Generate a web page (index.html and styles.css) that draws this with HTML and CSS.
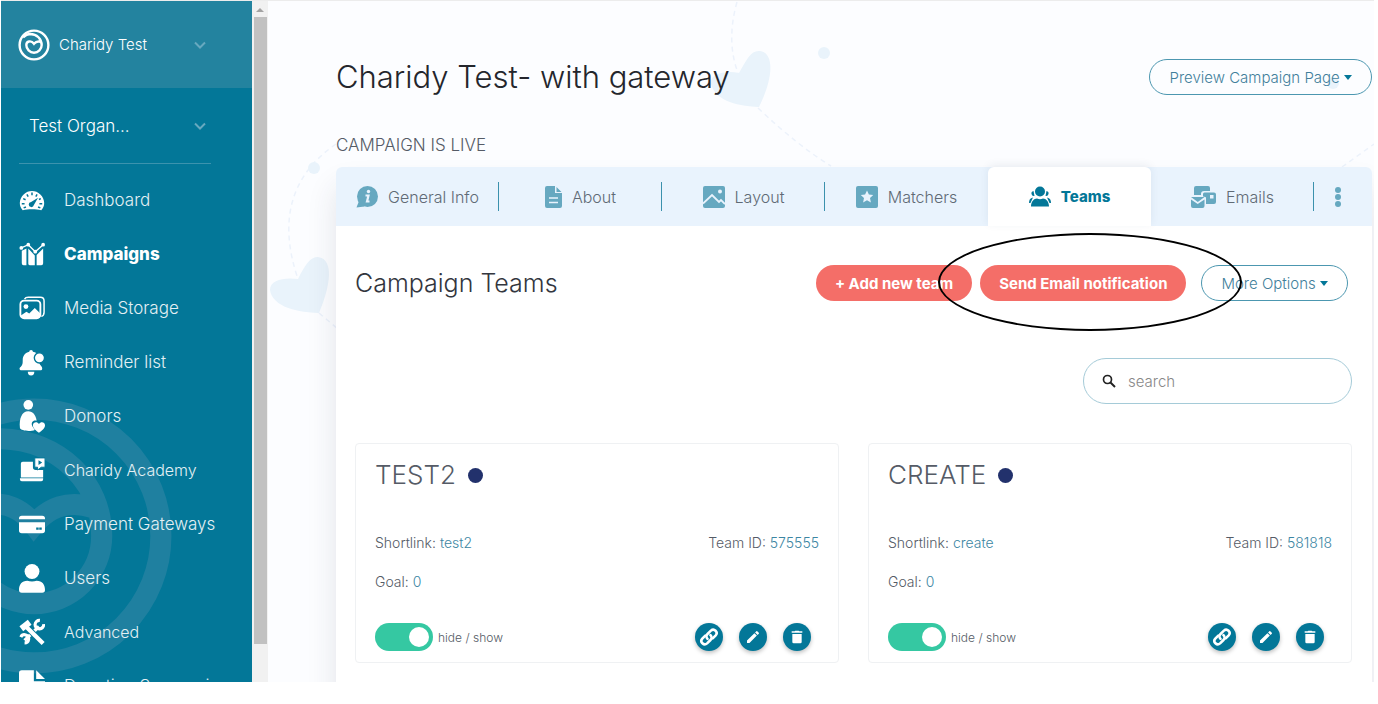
FILE: index.html
```html
<!DOCTYPE html>
<html lang="en">
<head>
  <meta charset="UTF-8">
  <meta name="viewport" content="width=device-width, initial-scale=1.0">
  <title>Campaign Teams</title>
  <link rel="stylesheet" href="styles.css">
</head>
<body>
<!-- shared icons -->
<svg class="sprite" aria-hidden="true">
  <symbol id="logo" viewBox="0 0 100 100">
    <g fill="none" stroke="currentColor" stroke-width="7.5">
      <circle cx="50" cy="50" r="45"/>
      <path d="M16 26C24 18 31 15.5 38 15.5C59 16 74 31 74 50A24 24 0 0 1 26 50C26 38 41 34 50 46C55 40 62 37 71 40"/>
    </g>
  </symbol>
  <symbol id="chevron" viewBox="0 0 12 8"><path d="M1 1.500l5 5 5-5" fill="none" stroke="currentColor" stroke-width="2"/></symbol>
  <symbol id="link" viewBox="0 0 20 20">
    <g fill="none" stroke="currentColor" stroke-width="2.6" stroke-linecap="round">
      <path d="M8.500 11.800a3.400 3.400 0 0 1 0-4.800l3.400-3.400a3.400 3.400 0 0 1 4.800 4.800l-3 3"/>
      <path d="M11.500 8.200a3.400 3.400 0 0 1 0 4.800l-3.400 3.400a3.400 3.400 0 0 1-4.800-4.800l3-3"/>
    </g>
  </symbol>
  <symbol id="pencil" viewBox="0 0 24 24"><path fill="currentColor" d="M3 17.300V21h3.700L17.800 9.900l-3.700-3.700zM20.700 7c.4-.4.4-1 0-1.400l-2.300-2.300a1 1 0 0 0-1.400 0l-1.900 1.800 3.800 3.800z"/></symbol>
  <symbol id="trash" viewBox="0 0 24 24"><path fill="currentColor" d="M5 7.500h14v12a2 2 0 0 1-2 2H7a2 2 0 0 1-2-2zM20 3.500v2.200H4V3.500h4.500l1-1h5l1 1z"/></symbol>
</svg>

<div class="app">
  <nav class="sidebar">
    <svg class="watermark" aria-hidden="true"><use href="#logo"/></svg>
    <button class="account">
      <svg class="brand"><use href="#logo"/></svg>
      <span>Charidy Test</span>
      <svg class="chevron"><use href="#chevron"/></svg>
    </button>
    <button class="organization">
      <span>Test Organ...</span>
      <svg class="chevron"><use href="#chevron"/></svg>
    </button>
    <ul class="menu">
      <li><a href="#">
        <svg viewBox="0 0 28 28"><path fill="currentColor" d="M4 25C-1 20 .5 12 5 8 10 3 18 3 23 8c4.500 4 6 12 1 17-6-1.500-14-1.500-20 0z"/><g stroke="#037798" stroke-width="1.600"><path d="M14 6v3M8.500 8l1.400 2.400M19.500 8l-1.400 2.400M4.500 12.500l2.600 1.200M3 18h3M22 18h3M5 22.500l2.500-1M23 22.500l-2.500-1M23.500 12.500l-2 1"/></g><path fill="#037798" d="M20.500 11.500l-4.500 8a2.800 2.800 0 1 1-3-3.400z"/></svg>
        Dashboard</a></li>
      <li class="active"><a href="#">
        <svg viewBox="0 0 28 28"><g fill="currentColor"><path d="M3 10.500l5-2.500v18H5a2 2 0 0 1-2-2zM10 8l7 7.500V26h-5.500a1.500 1.500 0 0 1-1.500-1.500zM19 15l7-7v16a2 2 0 0 1-2 2h-5z"/><circle cx="2.500" cy="7.500" r="2"/><circle cx="10" cy="4" r="2"/><circle cx="17.500" cy="11.500" r="2"/><circle cx="26" cy="4" r="2"/></g><path d="M2.500 7.500L10 4l7.500 7.500L26 4" fill="none" stroke="currentColor" stroke-width="1.500"/></svg>
        Campaigns</a></li>
      <li><a href="#">
        <svg viewBox="0 0 28 28"><path d="M6 4.500c1-2 2-2 4-2h13c3 0 4 1 4 4v12c0 3-1 4-3 4.500" fill="none" stroke="currentColor" stroke-width="1.600"/><rect x="1.500" y="6" width="21.500" height="19" rx="4" fill="none" stroke="currentColor" stroke-width="2"/><circle cx="7.500" cy="12.500" r="2.600" fill="currentColor"/><path d="M2 22l6-4 3 2 6-6 6 6v2q0 3-3 3H5q-3 0-3-3z" fill="currentColor"/></svg>
        Media Storage</a></li>
      <li><a href="#">
        <svg viewBox="0 0 28 28"><path fill="currentColor" d="M11 3a2 2 0 0 1 4 0c6 1 7 6 7 11 0 4 3 4 3 7 0 2-1 2-2 2H3c-3 0-3-3-1-4 2-2 2-4 2-7 0-5 3-8 7-9zM9.500 24.500h7c0 2.500-1 4-3.500 4s-3.500-1.500-3.500-4z"/><circle cx="22" cy="9.500" r="5.500" fill="currentColor" stroke="#037798" stroke-width="1.500"/></svg>
        Reminder list</a></li>
      <li><a href="#">
        <svg class="tall" viewBox="0 0 28 36"><g fill="currentColor"><circle cx="10" cy="6" r="5.200"/><path d="M1 31C0 21 3 13 10 13c5 0 8 4 9 10-4-1-6 2-5 5 .5 2 2 3 3 5-5 2-15 1-16-2z"/><path d="M21.500 36c-3-2-6.500-4.500-6.500-8s4.500-4.500 6.500-1.500c2-3 6.500-2 6.500 1.500s-3.500 6-6.500 8z"/></g></svg>
        Donors</a></li>
      <li class="compact"><a href="#">
        <svg viewBox="0 0 28 28"><path fill="currentColor" d="M4 5h11v6q0 3 3 3h8v8H2V7q0-2 2-2zM1 23h25v1q0 2-2 2H3q-2 0-2-2z"/><path d="M17 1h11v10h-4l-4 3v-3h-3z" fill="currentColor" stroke="#037798"/><path d="M21 3.500l4 2.500-4 2.500z" fill="#037798"/></svg>
        Charidy Academy</a></li>
      <li><a href="#">
        <svg viewBox="0 0 28 28"><path fill="currentColor" d="M3 5h22q3 0 3 3v1H0V8q0-3 3-3zM0 12h28v9q0 3-3 3H3q-3 0-3-3z"/><path d="M18.500 19h6" stroke="#037798" stroke-width="2.500" stroke-dasharray="2.700 .6"/></svg>
        Payment Gateways</a></li>
      <li><a href="#">
        <svg class="tall" viewBox="0 0 28 34"><circle cx="14" cy="10" r="8" fill="currentColor"/><path fill="currentColor" d="M0 30c0-6 3-10 9-10 3 1 7 1 10 0 6 0 9 4 9 10q0 3-3 3H3q-3 0-3-3z"/></svg>
        Users</a></li>
      <li class="compact"><a href="#">
        <svg viewBox="0 0 28 28"><path d="M6 23L21.500 8" stroke="currentColor" stroke-width="3.600"/><path d="M26.500 5.500a4.600 4.600 0 1 1-4-4M2 19.500a4.400 4.400 0 1 1 4 6.300" fill="none" stroke="currentColor" stroke-width="3.400"/><path d="M8 8.500l18 18" stroke="#037798" stroke-width="6.500"/><path d="M8 8.500L26 26.500" stroke="currentColor" stroke-width="4.600"/><path d="M2.500 10.500L11.500 3.500" stroke="currentColor" stroke-width="6.500"/></svg>
        Advanced</a></li>
      <li><a href="#">
        <svg class="tall" viewBox="0 0 28 34"><path fill="currentColor" d="M3 0h13v12h12v19q0 3-3 3H3q-3 0-3-3V3Q0 0 3 0zM18.500 0L28 9.500h-9.500z"/></svg>
        Donation Summaries</a></li>
    </ul>
  </nav>
  <div class="scrollbar"><span class="scroll-up"></span><span class="scroll-thumb"></span></div>

  <main class="main">
    <svg class="hearts" width="1106" height="400" aria-hidden="true">
      <g fill="none" stroke="#ecf2fb" stroke-width="1.500" stroke-dasharray="5 4">
        <path d="M469 1Q458 40 470 72M490 107Q530 145 563 165M68 143Q0 190 30 278M51 312L70 328M1074 166L1106 143"/>
      </g>
      <g fill="#e9f3fb">
        <path d="M471 72C479 58 483 49 492 50c15 2 13 28 -1 56C465 105 447 98 443 83c-2-10 14-14 28-11z"/>
        <path d="M30 278C37 264 42 256 50 256c16 2 13 28 1 56C22 311 4 303 2 289c0-10 14-13 28-11z"/>
        <circle cx="556" cy="52" r="6"/><circle cx="46" cy="167" r="6"/><circle cx="1065" cy="82" r="6"/>
      </g>
    </svg>
    <header class="page-head">
      <h1>Charidy Test- with gateway</h1>
      <button class="btn-outline">Preview Campaign Page <i class="caret"></i></button>
    </header>
    <p class="status">CAMPAIGN IS LIVE</p>

    <section class="panel">
      <nav class="tabs">
        <a href="#" class="tab divided">
          <svg viewBox="0 0 22 22"><circle cx="11.500" cy="10.500" r="10.500" fill="currentColor"/><path d="M3 15L.5 21.500l8-1z" fill="currentColor"/><circle cx="12.500" cy="5.500" r="1.700" fill="#e9f3fd"/><path d="M9.500 9.500h3l-1.500 6h2.500" fill="none" stroke="#e9f3fd" stroke-width="2.200"/></svg>
          General Info</a>
        <a href="#" class="tab divided">
          <svg class="narrow" viewBox="0 0 17 22"><path d="M2 0h8v7h7v13q0 2-2 2H2q-2 0-2-2V2Q0 0 2 0zM11.500 1l5 5h-5z" fill="currentColor"/><path d="M4 12h9M4 16.500h9" stroke="#e9f3fd" stroke-width="1.600"/></svg>
          About</a>
        <a href="#" class="tab divided">
          <svg viewBox="0 0 22 22"><rect width="22" height="22" rx="2" fill="currentColor"/><circle cx="17" cy="5.500" r="2" fill="#e9f3fd"/><path d="M0 17.500L9 9l7 7 2-2 4 4" fill="none" stroke="#e9f3fd" stroke-width="1.800"/></svg>
          Layout</a>
        <a href="#" class="tab">
          <svg viewBox="0 0 22 22"><rect width="22" height="22" rx="2" fill="currentColor"/><path d="M11 4.500l1.900 4 4.300.5-3.200 3 .9 4.400-3.900-2.200-3.900 2.200.9-4.400-3.200-3 4.300-.5z" fill="#e9f3fd"/></svg>
          Matchers</a>
        <a href="#" class="tab selected">
          <svg viewBox="0 0 22 22"><g fill="currentColor"><circle cx="11" cy="5.500" r="5"/><path d="M2 20.500c0-5 3-8 6-8q3 1.500 6 0c3 0 6 3 6 8z"/><path d="M4.500 5a2.500 2.500 0 0 0 1 5zM17.500 5a2.500 2.500 0 0 1-1 5zM0 17c0-3 1-5 4-5.500L1.500 17zM22 17c0-3-1-5-4-5.500l2.500 5.500z"/></g></svg>
          Teams</a>
        <a href="#" class="tab divided">
          <svg class="wide" viewBox="0 0 25 22"><path d="M5 0h12q2 0 2 2v3h-6q-3 0-3 3v1H3V2q0-2 2-2zM12 8q0-1.500 1.500-1.500H23q2 0 2 2V16q0 2-2 2h-8v-6q0-1.500-3-1.500zM0 11h13.500l-6.700 5zM0 13.500l6.700 4.500 6.800-4.500V20q0 2-2 2H2q-2 0-2-2z" fill="currentColor"/><rect x="19" y="9" width="3.500" height="3.500" fill="#e9f3fd"/></svg>
          Emails</a>
        <button class="more-tabs" aria-label="More"><span></span><span></span><span></span></button>
      </nav>

      <div class="panel-body">
        <div class="panel-head">
          <h2>Campaign Teams</h2>
          <div class="actions">
            <button class="btn">+ Add new team</button>
            <button class="btn">Send Email notification</button>
            <button class="btn-outline">More Options <i class="caret"></i></button>
            <div class="marker"></div>
          </div>
        </div>
        <label class="search">
          <svg viewBox="0 0 14 14"><circle cx="5.500" cy="5.500" r="4" fill="none" stroke="#222" stroke-width="1.700"/><path d="M8.500 8.500l4.500 4.500" stroke="#222" stroke-width="2"/></svg>
          <input type="search" placeholder="search" aria-label="search">
        </label>

        <div class="cards">
          <article class="card">
            <h3>TEST2 <i class="dot"></i></h3>
            <div class="info"><p>Shortlink: <a href="#">test2</a></p><p>Team ID: <b>575555</b></p></div>
            <div class="info"><p>Goal: <b>0</b></p></div>
            <div class="card-foot">
              <label class="toggle"><input type="checkbox" checked>hide / show</label>
              <div class="card-actions">
                <button aria-label="Copy link"><svg class="link"><use href="#link"/></svg></button>
                <button aria-label="Edit"><svg><use href="#pencil"/></svg></button>
                <button aria-label="Delete"><svg><use href="#trash"/></svg></button>
              </div>
            </div>
          </article>
          <article class="card">
            <h3>CREATE <i class="dot"></i></h3>
            <div class="info"><p>Shortlink: <a href="#">create</a></p><p>Team ID: <b>581818</b></p></div>
            <div class="info"><p>Goal: <b>0</b></p></div>
            <div class="card-foot">
              <label class="toggle"><input type="checkbox" checked>hide / show</label>
              <div class="card-actions">
                <button aria-label="Copy link"><svg class="link"><use href="#link"/></svg></button>
                <button aria-label="Edit"><svg><use href="#pencil"/></svg></button>
                <button aria-label="Delete"><svg><use href="#trash"/></svg></button>
              </div>
            </div>
          </article>
        </div>
      </div>
    </section>
  </main>
</div>
</body>
</html>
```
FILE: styles.css
```css
* {
  box-sizing: border-box;
}
body {
  margin: 0;
  background: #fff;
  color: #555b66;
  font-family: Inter, "Liberation Sans", sans-serif;
  font-weight: 300;
  overflow: hidden;
}
h1, h2, h3, p, ul {
  margin: 0;
  padding: 0;
  font-weight: 300;
}
button, input {
  font: inherit;
}
button {
  border: none;
  background: none;
  padding: 0;
  cursor: pointer;
}
a {
  color: inherit;
  text-decoration: none;
}
.sprite {
  display: none;
}
.app {
  display: flex;
  height: calc(100vh - 22px);
  margin: 0 4px 22px 1px;
  border-top: 1px solid #ececec;
  overflow: hidden;
}

/* sidebar */
.sidebar {
  position: relative;
  flex: 0 0 251px;
  background: #037798;
  color: #fff;
  overflow: hidden;
}
.watermark {
  position: absolute;
  left: -108px;
  top: 394px;
  width: 282px;
  height: 282px;
  color: #1f80a0;
}
.account,
.organization {
  position: relative;
  display: flex;
  align-items: center;
  color: #fff;
}
.account {
  width: 100%;
  height: 87px;
  padding: 0 46px 0 17px;
  gap: 9px;
  background: #23839f;
  font-size: 15px;
}
.organization {
  width: calc(100% - 59px);
  height: 76px;
  margin: 0 41px 9px 18px;
  padding: 0 5px 0 10px;
  border-bottom: 1px solid #3c93ae;
  font-size: 17px;
}
.brand {
  width: 32px;
  height: 32px;
}
.chevron {
  width: 12px;
  height: 8px;
  margin-left: auto;
  color: #67a9bf;
}
.menu {
  position: relative;
  list-style: none;
}
.menu a {
  display: flex;
  align-items: center;
  gap: 19px;
  height: 54px;
  padding-left: 18px;
  font-size: 17px;
  color: #e4f0f4;
  white-space: nowrap;
}
.menu .compact a {
  font-size: 16px;
}
.menu .active a {
  font-weight: 800;
  color: #fff;
}
.menu svg {
  width: 26px;
  height: 28px;
  color: #fff;
}
.menu svg.tall {
  height: 34px;
}
.scrollbar {
  flex: 0 0 16px;
  display: flex;
  flex-direction: column;
  align-items: center;
  background: #f1f1f1;
}
.scroll-up {
  margin: 7px 0 5px;
  border: 4px solid transparent;
  border-top: none;
  border-bottom-color: #a3a3a3;
}
.scroll-thumb {
  width: 13px;
  height: 92%;
  background: #c1c1c1;
}

/* main */
.main {
  position: relative;
  flex: 1;
  min-width: 0;
  padding: 57px 2px 0 68px;
  background: #fcfdff;
}
.hearts {
  position: absolute;
  left: 0;
  top: 0;
}
.page-head,
.panel-head {
  position: relative;
  display: flex;
  align-items: center;
  justify-content: space-between;
}
.page-head h1 {
  font-size: 31px;
  line-height: 38px;
  color: #24262c;
}
.status {
  position: relative;
  margin-top: 39px;
  font-size: 17px;
  line-height: 20px;
}
.btn,
.btn-outline {
  height: 36px;
  padding: 0 19px;
  border-radius: 18px;
  font-size: 15px;
  white-space: nowrap;
}
.btn {
  background: #f46e68;
  color: #fff;
  font-weight: 700;
}
.btn-outline {
  border: 1px solid #4c97b0;
  color: #427f9b;
}
.caret {
  display: inline-block;
  border: 4px solid transparent;
  border-top: 5px solid #037798;
  border-bottom: none;
  vertical-align: 3px;
}
.panel {
  position: relative;
  margin-top: 12px;
  min-height: 100%;
  background: #fff;
  border-radius: 6px 6px 0 0;
  box-shadow: 0 20px 30px rgba(40, 50, 70, 0.12);
}
.tabs {
  display: flex;
  height: 59px;
  background: #e9f3fd;
  border-radius: 6px 6px 0 0;
}
.tab {
  position: relative;
  flex: 1;
  display: flex;
  align-items: center;
  justify-content: center;
  gap: 10px;
  font-size: 16px;
  color: #606a75;
}
.tab.divided::after {
  content: "";
  position: absolute;
  right: 0;
  width: 1px;
  height: 29px;
  background: #3b91ad;
}
.tab.selected {
  background: #fff;
  color: #037798;
  font-size: 15px;
  font-weight: 800;
  border-radius: 6px 6px 0 0;
  box-shadow: 0 -2px 8px rgba(40, 70, 100, 0.08);
}
.tab svg {
  width: 22px;
  height: 22px;
  color: #66a8c0;
}
.tab svg.narrow {
  width: 17px;
}
.tab svg.wide {
  width: 25px;
}
.tab.selected svg {
  color: #037798;
}
.more-tabs {
  flex: 0 0 58px;
  display: flex;
  flex-direction: column;
  align-items: center;
  justify-content: center;
  gap: 1px;
  padding-right: 10px;
}
.more-tabs span {
  width: 6px;
  height: 6px;
  border-radius: 50%;
  background: #66a8c0;
}
.panel-body {
  padding: 39px 20px 38px 19px;
}
.panel-head h2 {
  font-size: 25px;
  line-height: 36px;
  color: #33363e;
}
.actions {
  position: relative;
  display: flex;
  gap: 8px;
  margin-right: 4px;
}
.actions .btn-outline {
  margin-left: 7px;
}
.marker {
  position: absolute;
  right: 106px;
  top: -32px;
  width: 304px;
  height: 98px;
  border: 2px solid #000;
  border-radius: 50%;
  pointer-events: none;
}
.search {
  display: flex;
  align-items: center;
  gap: 10px;
  width: 269px;
  height: 46px;
  margin: 57px 0 39px auto;
  padding: 0 18px;
  border: 1px solid #a5cbd8;
  border-radius: 23px;
}
.search svg {
  width: 14px;
  height: 14px;
}
.search input {
  flex: 1;
  min-width: 0;
  border: none;
  outline: none;
  background: none;
  font-size: 15px;
}
.search input::placeholder {
  color: #888;
}

/* team cards */
.cards {
  display: grid;
  grid-template-columns: 1fr 1fr;
  gap: 29px;
}
.card {
  padding: 16px 19px 11px;
  border: 1px solid #eff1f3;
  border-radius: 4px;
}
.card h3 {
  display: flex;
  align-items: center;
  gap: 12px;
  margin-bottom: 38px;
  font-size: 26px;
  line-height: 30px;
}
.dot {
  width: 15px;
  height: 15px;
  border-radius: 50%;
  background: #22316c;
}
.info {
  display: flex;
  justify-content: space-between;
  font-size: 14px;
  line-height: 20px;
  padding: 5px 0 14px;
}
.info a,
.info b {
  font-weight: 300;
  color: #3c86a3;
}
.card-foot {
  display: flex;
  align-items: center;
  justify-content: space-between;
  margin-top: 17px;
}
.toggle {
  display: flex;
  align-items: center;
  gap: 5px;
  font-size: 12px;
}
.toggle input {
  appearance: none;
  display: flex;
  align-items: center;
  width: 58px;
  height: 28px;
  margin: 0;
  padding: 0 4px;
  border-radius: 14px;
  background: #c8ced3;
}
.toggle input::before {
  content: "";
  width: 20px;
  height: 20px;
  border-radius: 50%;
  background: #fff;
}
.toggle input:checked {
  justify-content: flex-end;
  background: #35c8a2;
}
.card-actions {
  display: flex;
  gap: 16px;
  margin-right: 8px;
}
.card-actions button {
  display: grid;
  place-items: center;
  width: 28px;
  height: 28px;
  border-radius: 50%;
  background: #037798;
  color: #fff;
  box-shadow: 0 2px 4px rgba(0, 0, 0, 0.25);
}
.card-actions svg {
  width: 16px;
  height: 16px;
}
.card-actions .link {
  width: 20px;
  height: 20px;
}
```
